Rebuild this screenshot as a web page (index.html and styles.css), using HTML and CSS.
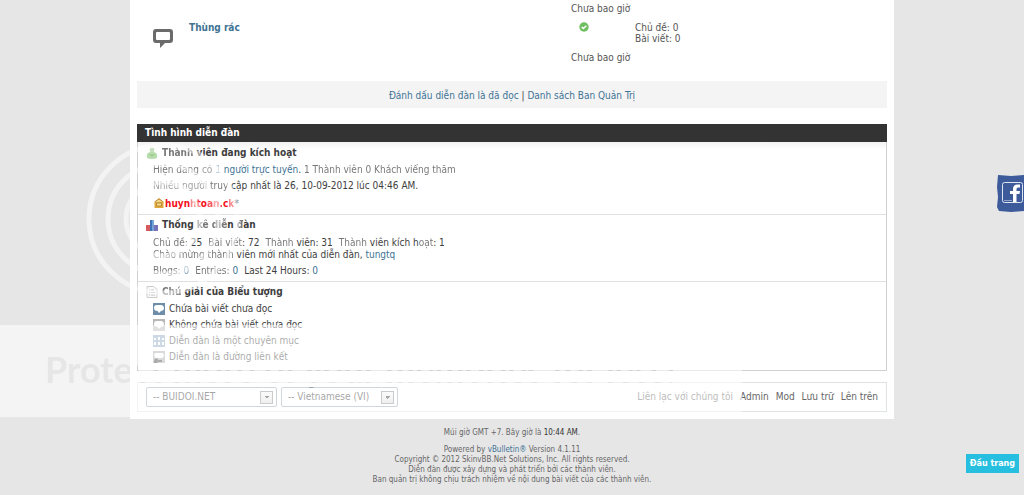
FILE: index.html
```
<!DOCTYPE html>
<html lang="vi">
<head>
<meta charset="utf-8">
<title>BUIDOI.NET</title>
<link rel="stylesheet" href="styles.css">
</head>

<body>

<main class="page">
  <section class="forum">
    <svg class="forum__icon" viewBox="0 0 20 20" aria-hidden="true">
      <path d="M3 1h14a3 3 0 0 1 3 3v8a3 3 0 0 1-3 3h-5l-5 5v-5H3a3 3 0 0 1-3-3V4a3 3 0 0 1 3-3zM4 4q-1 0-1 1v6q0 1 1 1h12q1 0 1-1V5q0-1-1-1z" fill="#6b6b6b" fill-rule="evenodd"/>
    </svg>
    <a href="#trash" class="forum__title">Thùng rác</a>
    <div class="forum__last">
      <p>Chưa bao giờ</p>
      <svg class="forum__ok" viewBox="0 0 10 10" aria-hidden="true">
        <circle cx="5" cy="5" r="4.700" fill="#6fbf62"/>
        <path d="M2.700 5l1.600 1.600L7.400 3.700" fill="none" stroke="#fff" stroke-width="1.400"/>
      </svg>
      <p>Chưa bao giờ</p>
    </div>
    <ul class="forum__stats">
      <li>Chủ đề: 0</li>
      <li>Bài viết: 0</li>
    </ul>
  </section>

  <nav class="links">
    <a href="#read">Đánh dấu diễn đàn là đã đọc</a> | <a href="#staff">Danh sách Ban Quản Trị</a>
  </nav>

  <section class="wgo">
    <h2 class="wgo__head">Tình hình diễn đàn</h2>

    <div class="block block--active">
      <h3 class="block__title">
        <svg class="icon" viewBox="0 0 12 12" aria-hidden="true">
          <circle cx="6" cy="3" r="2.400" fill="#c4dfbb"/>
          <path d="M1 11V8q0-3 5-3t5 3v3q-5 2-10 0z" fill="#b5dcaa"/>
          <path d="M4 7l2 2 2-2" fill="none" stroke="#8cbd80"/>
        </svg>
        <span><span class="fade">Thành</span> viên đang kích hoạt</span>
      </h3>
      <p class="line"><span class="fade">Hiện đang</span> <span class="faint">có</span> <a href="#online"><span class="faint">1</span> người trực tuyến</a>. <span class="fade">1 Thành viên 0 Khách viếng thăm</span></p>
      <p class="line"><span class="faint">Nhiều người</span> <span class="fade">truy</span> cập nhất là 26, 10-09-2012 lúc 04:46 AM.</p>
      <p class="line line--user">
        <svg class="icon icon--small" viewBox="0 0 11 10" aria-hidden="true">
          <path d="M1 4l4.500-4L10 4v6H1z" fill="#e1a83c"/>
          <path d="M1 4l4.500-3L10 4M3 5h5v3H3z" fill="#f7d888" stroke="#a8782d" stroke-width=".7"/>
        </svg><a href="#user" class="user">huyn<span class="faint">h</span>to<span class="fade">an</span><span class="fade">.</span>c<span class="faint">k</span></a>*
      </p>
    </div>

    <div class="block block--stats">
      <h3 class="block__title">
        <svg class="icon" viewBox="0 0 12 12" aria-hidden="true">
          <path d="M0 6h4v6H0z" fill="#d65b5f"/>
          <path d="M4 1h4v11H4z" fill="#3f73b6"/>
          <path d="M6 1h2v11H6z" fill="#75a4d8"/>
          <path d="M8 6h4v6H8z" fill="#7773b8"/>
        </svg>
        <span>Thống <span class="fade">kê</span> <span class="fade">diễ</span>n <span class="fade">đ</span>àn</span>
      </h3>
      <ul class="stats">
        <li><span class="fade">Chủ đề:</span> 25</li>
        <li><span class="fade">Bài viết</span>: 72</li>
        <li><span class="fade">Thành</span> viên: 31</li>
        <li><span class="fade">Thành</span> viên kích h<span class="fade">oạt</span>: 1</li>
      </ul>
      <p class="welcome"><span class="fade">Chào mừng</span> <span class="fade">thành</span> viên mới nhất của diễn đàn, <a href="#new">tungtq</a></p>
      <ul class="stats stats--blog">
        <li><span class="fade">Blogs: <a href="#blogs">0</a></span></li>
        <li><span class="fade">Entries:</span> <a href="#entries">0</a></li>
        <li>Last 24 Hours: <a href="#last">0</a></li>
      </ul>
    </div>

    <div class="block block--legend">
      <h3 class="block__title">
        <svg class="icon" viewBox="0 0 12 12" aria-hidden="true">
          <path d="M1 .5h7l3 3v8H1z" fill="#fafafa" stroke="#ccc"/>
          <path d="M3 4h1m1 0h3M3 6.500h1m1 0h4M3 9h1m1 0h4" stroke="#bbb"/>
        </svg>
        <span><span class="fade">Chú</span> giải của Biểu tượng</span>
      </h3>
      <ul class="legend">
        <li>
          <svg class="icon" viewBox="0 0 12 12" aria-hidden="true"><path d="M0 0h12v12H0z" fill="#6d8da9"/><path d="M3.500 2h5Q11 2.500 11 5T8 8L6 10 4.500 8Q1 8 1 5t2.500-3z" fill="#fff"/></svg>
          Chứa bài viết chưa đọc
        </li>
        <li>
          <svg class="icon" viewBox="0 0 12 12" aria-hidden="true"><path d="M0 0h12v12H0z" fill="#b8b8b8"/><path d="M3.500 2h5Q11 2.500 11 5T8 8L6 10 4.500 8Q1 8 1 5t2.500-3z" fill="#fff"/></svg>
          Không chứa bài viết chưa đọc
        </li>
        <li>
          <svg class="icon" viewBox="0 0 12 12" aria-hidden="true"><path d="M0 0h12v12H0z" fill="#8eabc4"/><path d="M1 3h2v2H1zm4-1h2v3H5zm4 1h2v2H9zM1 7h2v3H1zm4 0h2v3H5zm4 0h2v3H9z" fill="#fff"/></svg>
          Diễn đàn là một chuyên mục
        </li>
        <li>
          <svg class="icon" viewBox="0 0 12 12" aria-hidden="true"><path d="M0 0h12v12H0z" fill="#aaa"/><path d="M2 2h8l1 2-1 3H2L1 4z" fill="#fff"/><path d="M5 9h4v2H5z" fill="#444"/></svg>
          Diễn đàn là đường liên kết
        </li>
      </ul>
    </div>
  </section>

  <div class="bar">
    <select class="bar__select" aria-label="Giao diện">
      <option>-- BUIDOI.NET</option>
    </select>
    <select class="bar__select bar__select--lang" aria-label="Ngôn ngữ">
      <option>-- Vietnamese (VI)</option>
    </select>
    <nav class="bar__links">
      <a href="#contact">Liên lạc với chúng tôi</a>
      <a href="#admin">Admin</a>
      <a href="#mod">Mod</a>
      <a href="#archive">Lưu trữ</a>
      <a href="#top">Lên trên</a>
    </nav>
  </div>
</main>

<footer class="footer">
  <p class="footer__time">Múi giờ GMT +7. Bây giờ là <span class="footer__clock">10:44 AM</span>.</p>
  <p>Powered by <a href="#vb">vBulletin®</a> Version 4.1.11</p>
  <p>Copyright © 2012 SkinvBB.Net Solutions, Inc. All rights reserved.</p>
  <p>Diễn đàn được xây dựng và phát triển bởi các thành viên.</p>
  <p>Ban quản trị không chịu trách nhiệm về nội dung bài viết của các thành viên.</p>
</footer>

<!-- watermark -->
<svg class="mark" width="742" height="280" viewBox="0 0 742 280" aria-hidden="true">
  <mask id="slogan">
    <path d="M0 0h742v280H0z" fill="#fff"/>
    <text class="mark__text" x="45" y="246">Protect more of your memories for less!</text>
  </mask>
  <g fill="none" stroke="#fff" stroke-opacity=".5" stroke-width="5">
    <circle cx="163" cy="82" r="74"/>
    <circle cx="163" cy="82" r="55"/>
    <circle cx="163" cy="82" r="37"/>
  </g>
  <path d="M0 188h742v92H0z" fill="#fff" fill-opacity=".56" mask="url(#slogan)"/>
</svg>

<a href="#facebook" class="fb" aria-label="Facebook">
  <svg viewBox="0 0 27 38" aria-hidden="true">
    <path d="M1 1l13 1 13-1v36l-13 1-12-1-2-4 1-10-1-10z" fill="#3d5a9b"/>
    <rect x="5.500" y="8.500" width="20" height="20" rx="2" fill="#3d5a9b" stroke="#dfe5f1"/>
    <path d="M16 28v-8h-3v-3h3v-2q0-4.500 4.500-4.500H23v3h-2q-1.500 0-1.500 1.700V17H23l-.5 3h-3v8z" fill="#fff"/>
    <path d="M7 26.500h8" stroke="#91a3c9"/>
  </svg>
</a>
<a href="#top" class="totop">Đầu trang</a>

</body>

</html>
```
FILE: styles.css
```
/* reset */
body,h2,h3,p,ul{margin:0;padding:0}
ul{list-style:none}
h2,h3{font-size:100%}
svg{display:block}

/* page */
body{position:relative;background:#e6e6e6;font:10px/12px "DejaVu Sans Condensed","DejaVu Sans",Tahoma,sans-serif;color:#3e3e3e;}
a{color:#417394;text-decoration:none}
.page{margin:0 130px;padding:0 7px 7px;background:#fff;}
.fade{opacity:.7}
.faint{opacity:.5}

/* forum row */
.forum{display:flex;align-items:flex-start;height:81px;box-sizing:border-box;padding:3px 0 0 16px;color:#555;}
.forum__icon{width:20px;height:20px;margin:25px 16px 0 0;}
.forum__title{flex:1;margin-top:19px;font-weight:700;}
.forum__last{width:64px;}
.forum__ok{width:10px;height:10px;margin:7px 8px 20px;}
.forum__stats{width:252px;margin-top:19px;line-height:11px;}

.links{padding:9px 0 6px;background:#f4f4f4;text-align:center;}

/* what's going on */
.wgo{margin-top:16px;border:1px solid #d0d0d0;border-top:0;}
.wgo__head{margin:0 -1px;padding:3px 8px;background:#333;color:#fff;}
.block{padding:5px 8px 0;box-sizing:border-box;}
.block+.block{padding-top:4px;border-top:1px solid #e0e0e0;}
.block--active{height:72px;background:linear-gradient(#f1f1f1,#fff 8px);}
.block--stats{height:67px;}
.block--legend{height:89px;}
.block__title{display:flex;gap:4px;}
.icon{width:12px;height:12px;flex:none;}
.line{margin:5px 0 0 7px;}
.line+.line{margin-top:4px;}
.line--user{display:flex;}
.line+.line--user{margin-top:6px;}
.icon--small{height:10px;}
.user{color:#f50f18;font-weight:700;}
.stats{display:flex;gap:6px;margin:6px 0 0 7px;}
.welcome{margin-left:7px;}
.stats--blog{margin-top:4px;}
.legend{margin:5px 0 0 7px;}
.legend li{display:flex;gap:4px;margin-bottom:4px;}

/* bottom bar */
.bar{display:flex;align-items:center;gap:4px;margin-top:11px;padding:4px 8px;border:1px solid #e0e3e3;}
.bar__select{
  width:131px;height:20px;padding:0 6px;border:1px solid #95a3a8;border-radius:2px;color:#333;font:inherit;appearance:none;
  background:
    linear-gradient(135deg,#333 50%,transparent 0) no-repeat right 6px center / 3px 3px,
    linear-gradient(225deg,#333 50%,transparent 0) no-repeat right 9px center / 3px 3px,
    linear-gradient(#f4f4f4,#ddd) no-repeat right 4px center / 11px 11px,
    linear-gradient(#888,#888) no-repeat right 3px center / 13px 13px,
    #fff;
}
.bar__select--lang{width:117px;}
.bar__links{display:flex;gap:7px;margin-left:auto;}
.bar__links a{color:#666;}

/* footer */
.footer{padding:9px 0 10px;font-size:8px;line-height:10px;text-align:center;color:#666;}
.footer__time{margin-bottom:7px;}
.footer__clock{color:#333;}

/* overlays */
.mark{position:absolute;left:0;top:137px;pointer-events:none;}
.mark__text{font:700 36px Lato,sans-serif;fill:#000;}
.fb{position:fixed;right:0;top:174px;width:27px;}
.totop{position:fixed;right:5px;bottom:22px;padding:4px;background:#27bfe0;color:#fff;font:700 8px/11px "DejaVu Sans",sans-serif;}
```
